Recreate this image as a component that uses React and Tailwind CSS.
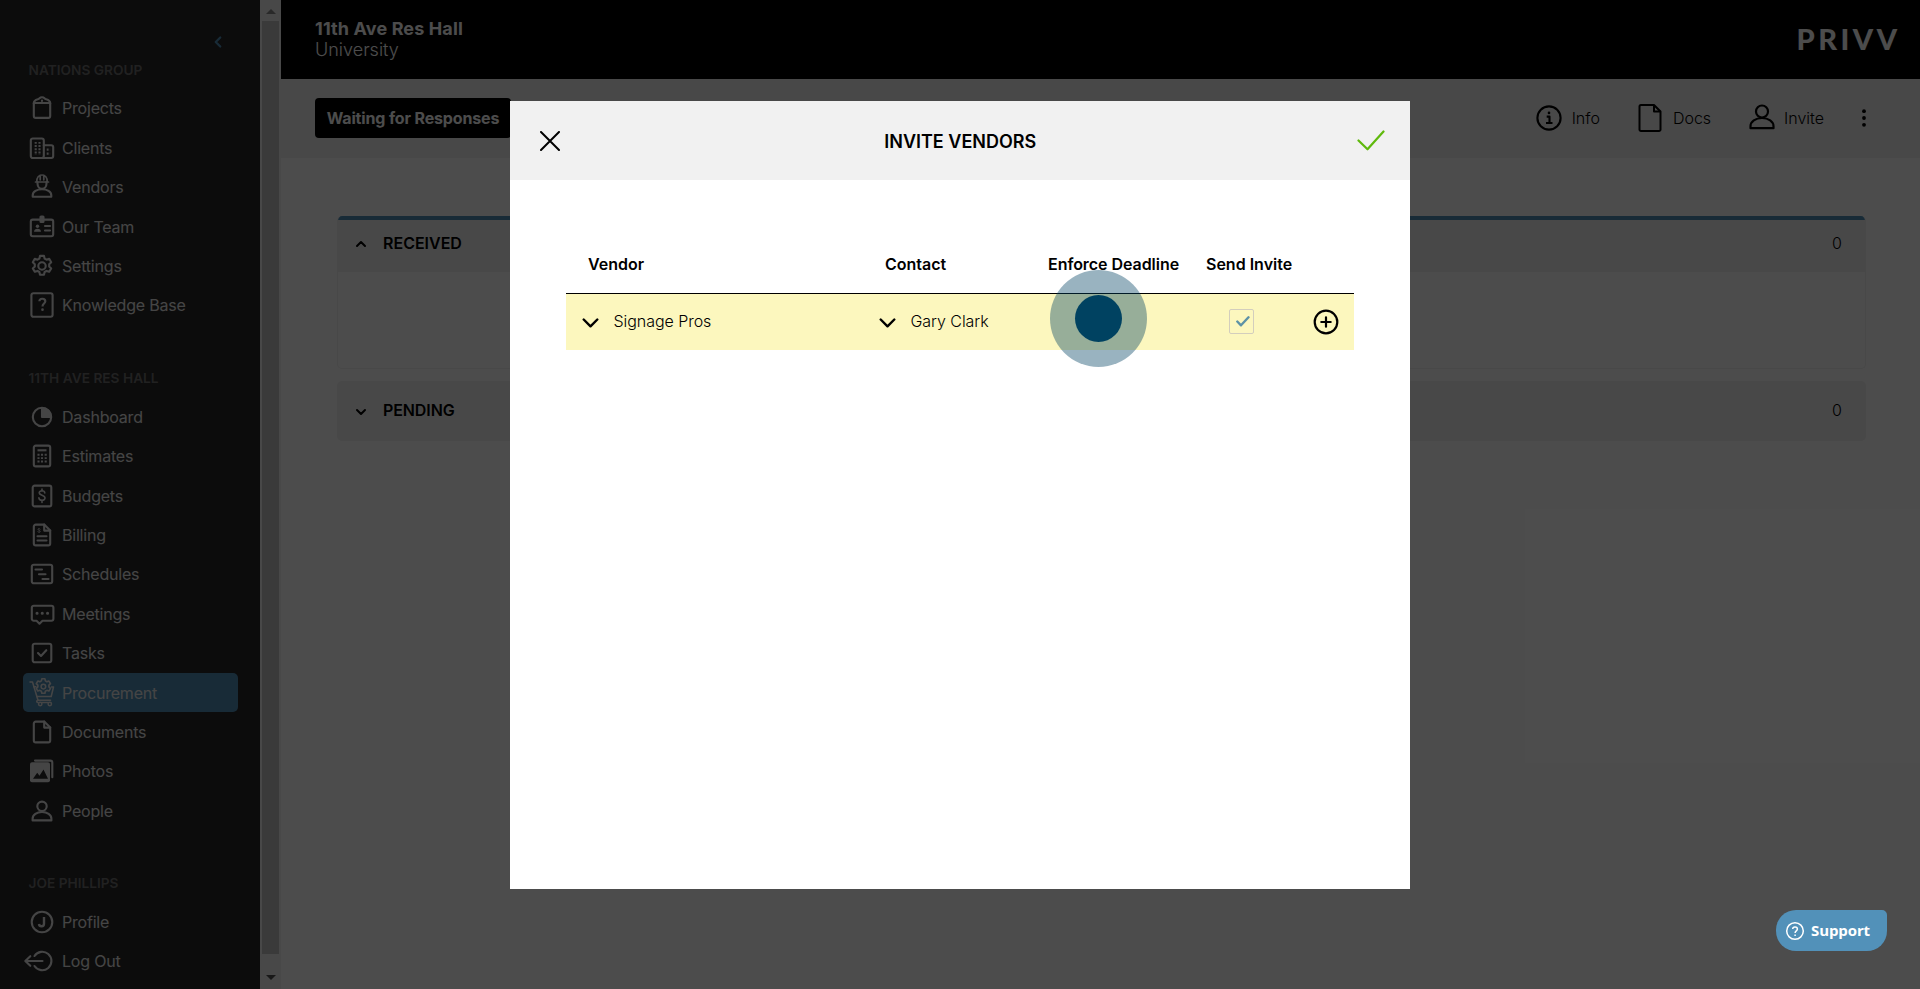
import { ChevronDown, ChevronLeft, ChevronUp } from "lucide-react";

function Icon({ children, className = "w-7 h-7" }) {
  return (
    <svg
      viewBox="0 0 28 28"
      fill="none"
      stroke="currentColor"
      strokeWidth="2.1"
      strokeLinecap="round"
      strokeLinejoin="round"
      className={`shrink-0 overflow-visible ${className}`}
    >
      {children}
    </svg>
  );
}

const GEAR =
  "M12 3.9h4l.6 2.7 1.9 1.1 2.7-.9 2 3.4-2 2v2.2l2 2-2 3.4-2.7-.9-1.9 1.1-.6 2.7h-4l-.6-2.7-1.9-1.1-2.7.9-2-3.4 2-2v-2.2l-2-2 2-3.4 2.7.9 1.9-1.1z";

const PERSON = "M4.6 23.4v-1.6c0-4 4.2-6.8 9.4-6.8s9.4 2.8 9.4 6.8v1.6z";

const icons = {
  projects: (
    <>
      <path d="M5.800 9v12.900a2 2 0 0 0 2 2h12.400a2 2 0 0 0 2-2V9z" />
      <path d="M5.800 9.500c0-2.800 1.500-3.600 4-4.200C11.300 5 11.500 3.200 14 3.200s2.700 1.800 4.200 2.100c2.500.6 4 1.400 4 4.200" />
      <path d="M14 6.600v.4" />
    </>
  ),
  clients: (
    <>
      <rect x="2.800" y="4.500" width="13" height="19.500" rx="2" />
      <path d="M15.800 11.300h7.400a2 2 0 0 1 2 2V22a2 2 0 0 1-2 2h-9" />
      <path d="M7.700 7.900v13M11.500 7.900v13M18.700 15.600h3.400M18.700 19.600h3.400" strokeDasharray="1.900 1.300" strokeLinecap="butt" />
    </>
  ),
  vendors: (
    <>
      <path d="M4.700 23.700v-1.400c0-3.600 4.200-6 9.300-6s9.300 2.400 9.300 6v1.400z" />
      <path d="M9.500 9v1.500c0 3 2 5.300 4.500 5.300s4.500-2.300 4.500-5.300V9" />
      <path d="M7.500 9h13M8.800 8.500C8.800 4.700 10.800 2 14 2s5.200 2.700 5.200 6.500M12.200 2.300v4.500M15.800 2.300v4.500" strokeWidth="1.700" />
    </>
  ),
  team: (
    <>
      <path d="M11.500 6.600H4.800a2 2 0 0 0-2 2v12.600a2 2 0 0 0 2 2h18.400a2 2 0 0 0 2-2V8.600a2 2 0 0 0-2-2h-6.700" />
      <rect x="12.500" y="3.500" width="3" height="5.500" rx=".5" fill="currentColor" />
      <path d="M17 13h5M17 17.500h5" />
      <circle cx="9.500" cy="13.200" r="1.700" fill="currentColor" stroke="none" />
      <path d="M6 18.800c0-2 1.500-3 3.500-3s3.500 1 3.500 3z" fill="currentColor" stroke="none" />
    </>
  ),
  settings: (
    <>
      <path d={GEAR} />
      <circle cx="14" cy="14" r="3.700" />
    </>
  ),
  knowledge: (
    <>
      <rect x="3.400" y="2.200" width="21.200" height="23.600" rx="2" />
      <path d="M11.400 10.200c.2-3.400 5.900-3.200 5.900.1 0 2.300-2.800 2.200-2.800 5.100" strokeWidth="2.200" strokeLinecap="butt" />
      <path d="M14.500 18.500v.2" strokeWidth="2.600" />
    </>
  ),
  dashboard: (
    <>
      <circle cx="14" cy="14" r="9.200" />
      <path d="M14 5v9h9a9 9 0 0 0-9-9z" fill="currentColor" />
    </>
  ),
  estimates: (
    <>
      <rect x="5.800" y="3.600" width="16.400" height="20.800" rx="2" />
      <path d="M9.500 8.300h9" strokeLinecap="butt" />
      <path d="M10.500 11.800v9M14 11.800v9M17.700 11.800v9" strokeDasharray="1.900 1.500" strokeLinecap="butt" />
    </>
  ),
  budgets: (
    <>
      <rect x="4.700" y="3.600" width="18.600" height="20.800" rx="2" />
      <path d="M16.800 11c-.2-3-5.700-2.900-5.600-.1.100 2.900 5.800 2 5.800 5.200 0 3-5.900 3-6.100-.2M14 7v2M14 18.500v2" strokeWidth="1.600" />
    </>
  ),
  billing: (
    <>
      <path d="M16.200 3.600H7.800a2 2 0 0 0-2 2v16.800a2 2 0 0 0 2 2h12.400a2 2 0 0 0 2-2V9.600z" />
      <path d="M16.200 3.600v6h6M9.500 15.300h9M9.500 19.500h9" />
      <path d="M12 8.200c-.4-1.200-2-.8-1.900.3.100 1.200 2 .7 2 2 0 1.100-1.800 1.200-2.200.2" strokeWidth="1" />
    </>
  ),
  schedules: (
    <>
      <rect x="3.800" y="4.700" width="20.400" height="18.600" rx="2" />
      <path d="M7.500 9.500h6.500M11 14.200h6.500M14.500 19h6" />
    </>
  ),
  meetings: (
    <>
      <path d="M5.800 5.700h17.600a2 2 0 0 1 2 2v11a2 2 0 0 1-2 2h-8.900l-3 3-3-3H5.800a2 2 0 0 1-2-2v-11a2 2 0 0 1 2-2z" />
      <path d="M9 13.200h.1M14.200 13.200h.1M19.500 13.200h.1" strokeWidth="3" />
    </>
  ),
  tasks: (
    <>
      <rect x="4.700" y="4.700" width="18.600" height="18.600" rx="2" />
      <path d="m10 14 3 3 5.300-5.800" />
    </>
  ),
  procurement: (
    <g strokeWidth="1.500">
      <path d="M2 3h2.500L10 21.300h12.500" />
      <path d="M5.800 7.800h2M8.800 17.500h14.400L25.500 8h-2" />
      <path d={GEAR} transform="translate(4.600 -3.200) scale(.77)" strokeWidth="2.100" />
      <circle cx="15.400" cy="7.600" r="2.300" />
      <circle cx="12.200" cy="25" r="1.700" />
      <circle cx="21.800" cy="25" r="1.700" />
      <path d="M10 21.300c-1.600.2-1.800 2.200 0 2.300M13.900 23.600h6.200" />
    </g>
  ),
  documents: (
    <>
      <path d="M16.200 3.600H7.800a2 2 0 0 0-2 2v16.800a2 2 0 0 0 2 2h12.400a2 2 0 0 0 2-2V9.600z" />
      <path d="M16.200 3.600v6h6" />
    </>
  ),
  photos: (
    <>
      <path d="M7 3.600h15.300a2 2 0 0 1 2 2v14.600" />
      <rect x="2" y="5.200" width="20" height="20" rx="2" fill="currentColor" stroke="none" />
      <path d="m5 21.800 4.200-6 2.300 3 4-6.300 4.500 9.300z" fill="#28282a" stroke="none" />
    </>
  ),
  people: (
    <>
      <circle cx="14" cy="9.300" r="4.700" />
      <path d={PERSON} />
    </>
  ),
  profile: (
    <>
      <circle cx="14" cy="14" r="10.300" />
      <path d="M16 9v6.700c0 3.200-4.600 3.400-5 .3" strokeWidth="2.400" strokeLinecap="butt" />
    </>
  ),
  logout: (
    <>
      <path d="M6.500 9a9.200 9.200 0 1 1 0 10" />
      <path d="M14.500 14h-17M2.300 9.200-2.700 14l5 4.800" />
    </>
  ),
};

const sections = [
  {
    title: "NATIONS GROUP",
    items: [
      ["Projects", "projects"],
      ["Clients", "clients"],
      ["Vendors", "vendors"],
      ["Our Team", "team"],
      ["Settings", "settings"],
      ["Knowledge Base", "knowledge"],
    ],
  },
  {
    title: "11TH AVE RES HALL",
    items: [
      ["Dashboard", "dashboard"],
      ["Estimates", "estimates"],
      ["Budgets", "budgets"],
      ["Billing", "billing"],
      ["Schedules", "schedules"],
      ["Meetings", "meetings"],
      ["Tasks", "tasks"],
      ["Procurement", "procurement"],
      ["Documents", "documents"],
      ["Photos", "photos"],
      ["People", "people"],
    ],
  },
  {
    title: "JOE PHILLIPS",
    items: [
      ["Profile", "profile"],
      ["Log Out", "logout"],
    ],
  },
];

function Sidebar() {
  return (
    <aside className="w-[260px] shrink-0 bg-[#28282a] pl-[23px] pr-[22px] text-[#e8e8e8]">
      <div className="h-[49.4px] flex items-end justify-end pr-[11px]">
        <ChevronLeft className="w-[18px] h-[18px] mb-[-2px] text-[#5291b9]" strokeWidth={3} />
      </div>
      <nav className="flex flex-col gap-[32.6px]">
        {sections.map((section) => (
          <div key={section.title}>
            <h3 className="h-[39.4px] flex items-center pl-[5.5px] pt-0.5 text-[13.7px] font-semibold text-[#707070]">
              {section.title}
            </h3>
            {section.items.map(([label, icon]) => (
              <a
                key={label}
                className={`h-[39.4px] flex items-center gap-[6px] pl-[5px] rounded-[5px] text-base tracking-[-0.2px] ${
                  label === "Procurement" ? "bg-[#5291b9]" : ""
                }`}
              >
                <Icon>{icons[icon]}</Icon>
                {label}
              </a>
            ))}
          </div>
        ))}
      </nav>
    </aside>
  );
}

function Scrollbar() {
  return (
    <div className="w-[21px] shrink-0 bg-[#f1f1f1] flex flex-col items-center">
      <svg viewBox="0 0 10 5" className="w-[10px] h-[5px] mt-[9px] mb-[7px] shrink-0 fill-[#8a8a8a]">
        <path d="M5 0l5 5H0z" />
      </svg>
      <div className="w-[17px] h-[933px] shrink-0 bg-[#c4c4c4]" />
      <svg viewBox="0 0 10 5" className="w-[10px] h-[5px] mt-auto mb-[9px] shrink-0 fill-[#505050]">
        <path d="M5 5L0 0h10z" />
      </svg>
    </div>
  );
}

function TopBar() {
  return (
    <header className="h-[79px] bg-black text-white flex items-center justify-between pl-[34px] pr-[23px]">
      <div className="text-[18px] leading-[21px] pb-0.5">
        <div className="font-bold tracking-[0.12px]">11th Ave Res Hall</div>
        <div className="font-light">University</div>
      </div>
      <span className="font-['Lato'] font-black text-[29px] leading-none tracking-[3.5px] -mr-[3.5px] pb-0.5">PRIVV</span>
    </header>
  );
}

function ActionBar() {
  return (
    <div className="h-[79px] bg-[#f1f1f1] flex items-center justify-between pl-[34px] pr-[53px] pb-0.5">
      <div className="h-10 w-[196px] flex items-center justify-center rounded bg-black text-white text-base font-bold tracking-[-0.15px]">
        Waiting for Responses
      </div>
      <div className="flex items-center text-base text-black">
        <Icon className="w-7 h-7">
          <circle cx="14" cy="14" r="11.600" />
          <path d="M11.700 12.600H14.500v6M11 19h6.500" strokeLinecap="butt" />
          <path d="M14 8.800v.2" strokeWidth="2.600" />
        </Icon>
        <span className="ml-[9px] font-light">Info</span>
        <svg viewBox="0 0 24 30" fill="none" stroke="currentColor" strokeWidth="2" strokeLinejoin="round" className="w-6 h-[30px] ml-[38px]">
          <path d="M16 2H3a1.500 1.500 0 0 0-1.500 1.500v23A1.500 1.500 0 0 0 3 28h18a1.500 1.500 0 0 0 1.500-1.500V8.500z" />
          <path d="M16 2v6.500h6.500" />
        </svg>
        <span className="ml-[11px] font-light">Docs</span>
        <svg viewBox="0 0 26 26" fill="none" stroke="currentColor" strokeWidth="2.200" strokeLinejoin="round" className="w-[26px] h-[26px] ml-[38px] mb-0.5">
          <circle cx="13" cy="7.500" r="6" />
          <path d="M1.500 24.200v-2C1.500 17.500 6.500 14 13 14s11.500 3.500 11.500 8.200v2z" />
        </svg>
        <span className="ml-[9px] font-light">Invite</span>
        <svg viewBox="0 0 6 20" className="w-[6px] h-5 ml-[37px] fill-black">
          <circle cx="3" cy="3.200" r="1.900" />
          <circle cx="3" cy="10" r="1.900" />
          <circle cx="3" cy="16.800" r="1.900" />
        </svg>
      </div>
    </div>
  );
}

function Panels() {
  return (
    <div className="pt-[58px] pl-[56px] pr-[54px] text-base text-black">
      <section className="h-[153px] border border-[#f1f1f1] border-t-0 rounded-[5px] overflow-hidden">
        <div className="h-1 bg-[#5291b9]" />
        <div className="h-[52px] bg-[#f1f1f1] flex items-center pl-[15px] pr-[23px] pb-[7px]">
          <ChevronUp className="w-4 h-4 mt-0.5" strokeWidth={3} />
          <span className="ml-[14px] font-semibold">RECEIVED</span>
          <span className="ml-auto font-light">0</span>
        </div>
      </section>
      <section className="mt-3 h-[60px] rounded-[5px] bg-[#f1f1f1] flex items-center pl-4 pr-6 pb-0.5">
        <ChevronDown className="w-4 h-4 mt-[3px]" strokeWidth={3} />
        <span className="ml-[14px] font-semibold tracking-[-0.1px]">PENDING</span>
        <span className="ml-auto font-light">0</span>
      </section>
    </div>
  );
}

function DownCaret() {
  return (
    <svg viewBox="0 0 17 10" fill="none" stroke="currentColor" strokeWidth="2.400" strokeLinecap="round" strokeLinejoin="round" className="w-[17px] h-[10px] mt-1">
      <path d="M1.700 1.500l6.800 6.800 6.800-6.800" />
    </svg>
  );
}

function InviteModal() {
  return (
    <div className="w-[900px] h-[788px] bg-white text-black">
      <div className="h-[79px] bg-[#f1f1f1] flex items-center justify-between pl-[29.5px] pr-[25px]">
        <svg viewBox="0 0 20 20" fill="none" stroke="currentColor" strokeWidth="2" strokeLinecap="round" className="w-5 h-5">
          <path d="M1 1l18 18M19 1L1 19" />
        </svg>
        <h2 className="text-[18px] font-semibold pt-px pl-[4px]">INVITE VENDORS</h2>
        <svg viewBox="0 0 28 21" fill="none" stroke="#5fb90c" strokeWidth="2.200" strokeLinecap="round" strokeLinejoin="round" className="w-7 h-[21px]">
          <path d="M1.500 10.500l9 8.800L26.500 1.500" />
        </svg>
      </div>
      <div className="mx-14 pt-[56px] text-base">
        <div className="h-[58px] flex items-center pb-0.5 border-b border-black font-semibold">
          <span className="w-[297px] pl-[22px]">Vendor</span>
          <span className="w-[185px] pl-[22px]">Contact</span>
          <span className="w-[158px] tracking-[-0.05px]">Enforce Deadline</span>
          <span>Send Invite</span>
        </div>
        <div className="h-14 bg-[#fcf7be] flex items-center font-light pb-0.5">
          <div className="w-[297px] pl-4 flex items-center">
            <DownCaret />
            <span className="ml-[14.5px] tracking-[-0.05px]">Signage Pros</span>
          </div>
          <div className="w-[185px] pl-4 flex items-center">
            <DownCaret />
            <span className="ml-[14.5px] tracking-[-0.05px]">Gary Clark</span>
          </div>
          <div className="w-[181px]" />
          <div className="w-[25px] h-[25px] border border-[#d3cebd] rounded-[2px] flex items-center justify-center">
            <svg viewBox="0 0 14 11" fill="none" stroke="#5d92a6" strokeWidth="2.400" strokeLinecap="round" strokeLinejoin="round" className="w-[14px] h-[11px] ml-0.5">
              <path d="M1.300 5.500L5 9.300l7.500-8" />
            </svg>
          </div>
          <svg viewBox="0 0 26 26" fill="none" stroke="currentColor" strokeWidth="2.200" strokeLinecap="round" className="w-[26px] h-[26px] ml-[59px] mt-0.5">
            <circle cx="13" cy="13" r="11.300" />
            <path d="M13 8.300v9.400M8.300 13h9.400" />
          </svg>
        </div>
      </div>
    </div>
  );
}

export default function App() {
  return (
    <div className="relative w-full h-[989px] overflow-hidden bg-white font-['Inter',sans-serif]">
      <div className="flex h-full">
        <Sidebar />
        <Scrollbar />
        <main className="flex-1">
          <TopBar />
          <ActionBar />
          <Panels />
        </main>
      </div>

      <div className="absolute inset-0 bg-black/70 flex justify-center items-start pt-[101px]">
        <InviteModal />
      </div>

      {/* click marker */}
      <div className="absolute left-[1050px] top-[270px] w-[97px] h-[97px] rounded-full bg-[#004261]/40 flex items-center justify-center">
        <div className="w-[47px] h-[47px] rounded-full bg-[#004261]" />
      </div>

      <button className="absolute left-[1776px] top-[910px] w-[111px] h-[41px] bg-[#5291b9] text-white rounded-[20px] rounded-tr-[5px] flex items-center pl-[9px] gap-[6px] font-['Open_Sans',sans-serif] font-bold text-[15px] tracking-[-0.1px]">
        <svg viewBox="0 0 20 20" fill="none" stroke="currentColor" strokeWidth="1.500" className="w-5 h-5">
          <circle cx="10" cy="10" r="8.300" />
          <path d="M7.700 8c.2-2.800 4.700-2.600 4.700.1 0 1.800-2.300 1.700-2.300 3.800M10.100 13.500v1.500" />
        </svg>
        Support
      </button>
    </div>
  );
}
